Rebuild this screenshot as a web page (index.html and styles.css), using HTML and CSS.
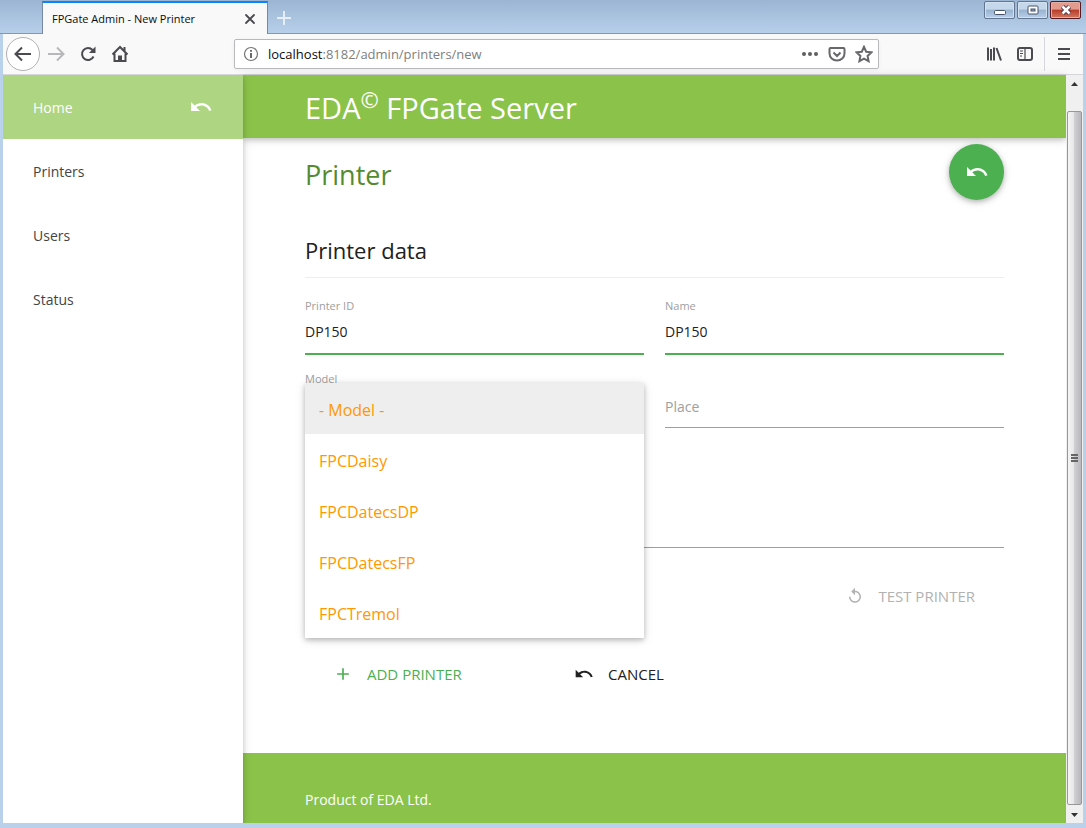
FILE: index.html
```html
<!DOCTYPE html>
<html lang="en">
<head>
<meta charset="utf-8">
<meta name="viewport" content="width=device-width, initial-scale=1">
<title>FPGate Admin - New Printer</title>
<link rel="stylesheet" href="styles.css">
</head>
<body>
<svg width="0" height="0" class="sprite" aria-hidden="true">
  <symbol id="undo" viewBox="0 0 24 24"><path fill="currentColor" d="M12.5 8c-2.65 0-5.05.99-6.9 2.6L2 7v9h9l-3.620-3.620c1.390-1.160 3.160-1.880 5.120-1.880 3.540 0 6.550 2.310 7.600 5.500l2.370-.78C21.080 11.030 17.150 8 12.500 8z"/></symbol>
  <symbol id="replay" viewBox="0 0 24 24"><path fill="currentColor" d="M12 5V1L7 6l5 5V7c3.310 0 6 2.690 6 6s-2.690 6-6 6-6-2.690-6-6H4c0 4.420 3.580 8 8 8s8-3.580 8-8-3.580-8-8-8z"/></symbol>
  <symbol id="plus" viewBox="0 0 24 24"><path fill="currentColor" d="M19 13h-6v6h-2v-6H5v-2h6V5h2v6h6v2z"/></symbol>
</svg>
<div class="window">
  <header class="titlebar">
    <div class="tab"><span>FPGate Admin - New Printer</span>
      <button class="bare" aria-label="Close tab"><svg width="12" height="12" viewBox="0 0 12 12"><path d="M2 2l8 8M10 2l-8 8" stroke="#4a4a4f" stroke-width="1.800" stroke-linecap="round"/></svg></button>
    </div>
    <button class="bare new-tab" aria-label="New tab"><svg width="14" height="14" viewBox="0 0 14 14"><path d="M7 0v14M0 7h14" stroke="#e6eef7" stroke-width="2"/></svg></button>
    <div class="window-buttons">
      <button aria-label="Minimize"><svg width="12" height="10" viewBox="0 0 12 10"><rect x="0.500" y="5.500" width="11" height="4" rx="1" fill="#fff" stroke="#48536b"/></svg></button>
      <button aria-label="Maximize"><svg width="12" height="10" viewBox="0 0 12 10"><rect x="1" y="1" width="10" height="8" rx="1" fill="#fff" stroke="#48536b"/><rect x="4" y="4" width="4" height="2" fill="#8fa8c6" stroke="#48536b"/></svg></button>
      <button class="close" aria-label="Close"><svg width="12" height="10" viewBox="0 0 12 10"><path d="M2.500 1.500l7 7M9.500 1.500l-7 7" stroke="#4b3340" stroke-width="4.500"/><path d="M2.500 1.500l7 7M9.500 1.500l-7 7" stroke="#fff" stroke-width="2.600"/></svg></button>
    </div>
  </header>
  <div class="toolbar">
    <div class="nav-buttons">
      <button class="bare back" aria-label="Back"><svg width="18" height="18" viewBox="0 0 18 18"><path d="M17 9H2M8 2.500L1.500 9 8 15.500" class="line"/></svg></button>
      <button class="bare dim" aria-label="Forward"><svg width="18" height="18" viewBox="0 0 18 18"><path d="M1 9h15M10 2.500L16.500 9 10 15.500" class="line"/></svg></button>
      <button class="bare" aria-label="Reload"><svg width="18" height="18" viewBox="0 0 18 18"><path d="M14.500 11.500A6 6 0 1 1 13.500 5" class="line"/><path d="M16.500 1.500V8H10z" fill="currentColor"/></svg></button>
      <button class="bare" aria-label="Home page"><svg width="18" height="18" viewBox="0 0 18 18"><path d="M1.500 9.500L9 2l7.500 7.500M3.500 8.500V16h11V8.500M13.500 2v4" class="line"/><path d="M7 16v-5.500h4V16z" fill="currentColor"/></svg></button>
    </div>
    <div class="address">
      <svg width="16" height="16" viewBox="0 0 16 16"><circle cx="8" cy="8" r="6.500" fill="none" stroke="#737373" stroke-width="1.200"/><path d="M8 7v5M8 4v1.800" stroke="#5a5a5a" stroke-width="1.800"/></svg>
      <div class="url"><b>localhost</b>:8182/admin/printers/new</div>
      <button class="bare" aria-label="Page actions"><svg width="18" height="18" viewBox="0 0 18 18" fill="#5f5f60"><circle cx="3" cy="9" r="2"/><circle cx="9" cy="9" r="2"/><circle cx="15" cy="9" r="2"/></svg></button>
      <button class="bare" aria-label="Save to Pocket"><svg width="18" height="18" viewBox="0 0 18 18"><path d="M2.500 3h13q1 0 1 1v4.500a7.500 7 0 0 1-15 0V4q0-1 1-1zM5.500 7.500L9 11l3.500-3.500" class="line"/></svg></button>
      <button class="bare" aria-label="Bookmark"><svg width="18" height="18" viewBox="0 0 18 18"><path d="M9 1.800l2.200 4.900 5.300.6-3.900 3.600 1 5.300L9 13.600l-4.600 2.600 1-5.300-3.900-3.600 5.300-.6z" class="line"/></svg></button>
    </div>
    <div class="tools">
      <button class="bare" aria-label="Library"><svg width="16" height="16" viewBox="0 0 16 16"><path d="M2 1.500v13M5 3v11.500M8 1.500v13M10.500 2l4.500 12.500" class="line"/></svg></button>
      <button class="bare" aria-label="Sidebars"><svg width="18" height="16" viewBox="0 0 18 16"><rect x="2" y="2" width="14" height="12" rx="2" class="line"/><path d="M9 2v12M4 5h3M4 7.500h3M4 10h2" stroke="currentColor" stroke-width="1.200"/></svg></button>
      <button class="bare menu" aria-label="Menu"><svg width="14" height="14" viewBox="0 0 14 14"><path d="M1 2h12M1 7h12M1 12h12" class="line"/></svg></button>
    </div>
  </div>
  <div class="viewport">
    <nav class="sidebar">
      <a href="#" class="active">Home <svg width="24" height="24"><use href="#undo"/></svg></a>
      <a href="#">Printers</a>
      <a href="#">Users</a>
      <a href="#">Status</a>
    </nav>
    <div class="page">
      <header class="brand">EDA<sup>©</sup>&nbsp;FPGate Server</header>
      <main>
        <div class="heading"><h1>Printer</h1>
          <button class="fab" aria-label="Go back"><svg width="24" height="24"><use href="#undo"/></svg></button>
        </div>
        <h2>Printer data</h2>
        <form>
          <div class="field valid"><label for="pid">Printer ID</label><input id="pid" value="DP150"></div>
          <div class="field valid"><label for="pname">Name</label><input id="pname" value="DP150"></div>
          <div class="field model"><label for="model">Model</label>
            <select id="model"><option></option></select>
            <ul class="dropdown">
              <li class="selected">- Model -</li><li>FPCDaisy</li><li>FPCDatecsDP</li><li>FPCDatecsFP</li><li>FPCTremol</li>
            </ul>
          </div>
          <div class="field place"><input placeholder="Place" aria-label="Place"></div>
          <textarea aria-label="Description"></textarea>
          <div class="test"><button type="button" class="flat" disabled><svg width="18" height="18"><use href="#replay"/></svg>TEST PRINTER</button></div>
          <div class="actions">
            <button type="button" class="flat add"><svg width="20" height="20"><use href="#plus"/></svg>ADD PRINTER</button>
            <button type="button" class="flat"><svg width="20" height="20"><use href="#undo"/></svg>CANCEL</button>
          </div>
        </form>
      </main>
      <footer>Product of EDA Ltd.</footer>
    </div>
    <div class="scrollbar" aria-hidden="true">
      <svg width="17" height="18" viewBox="0 0 17 18"><path d="M5 10l3.500-4L12 10z" fill="#333"/></svg>
      <div class="thumb"><i></i><i></i><i></i></div>
      <svg width="17" height="18" viewBox="0 0 17 18"><path d="M5 8l3.500 4L12 8z" fill="#333"/></svg>
    </div>
  </div>
</div>
</body>
</html>
```
FILE: styles.css
```css
* { box-sizing: border-box; }
body { margin: 0; font-family: "Open Sans", "Noto Sans", sans-serif; font-size: 14px; color: #212121; }
button, input, select, textarea { font: inherit; color: inherit; }
svg { display: block; flex: none; }
.sprite { position: absolute; }
.line { fill: none; stroke: currentColor; stroke-width: 2; }
.bare { display: grid; place-items: center; padding: 0; border: 0; background: none; color: #4a4a4f; }

.window { display: flex; flex-direction: column; height: 100vh; padding: 0 3px 5px; background: #b9d1ea; }
.titlebar { display: flex; align-items: stretch; height: 34px; flex: none; margin: 0 -3px; padding: 1px 5px 0 42px; background: linear-gradient(#9bb5d3, #b8d0ea); box-shadow: inset 0 -1px #8596b0; }
.tab { display: flex; align-items: center; justify-content: space-between; width: 226px; padding: 0 11px 0 9px; border: solid #7688a3; border-width: 0 1px; border-top: 2px solid #0a84ff; background: #f9f9fa; color: #0c0c0d; white-space: nowrap; }
.tab span { font-size: 11px; }
.new-tab { margin-left: 9px; }
.window-buttons { display: flex; gap: 2px; margin-left: auto; height: 18px; }
.window-buttons button { display: grid; place-items: center; width: 31px; padding: 0; border: 1px solid #63758f; border-radius: 2px; background: linear-gradient(#c4d7eb 45%, #98b2d0 50%, #b8cfe8); box-shadow: inset 0 0 0 1px #d3e2f1; }
.window-buttons .close { border-color: #521b25; background: linear-gradient(#e29b8d 45%, #b83b28 50%, #d27a5f); box-shadow: inset 0 0 0 1px #e9aea2; }

.toolbar { display: flex; align-items: center; height: 41px; flex: none; background: #f9f9fa; border-bottom: 1px solid #d7d7db; }
.nav-buttons { display: flex; align-items: center; gap: 14px; width: 231px; padding-left: 3px; }
.nav-buttons .back { width: 34px; height: 34px; border: 1px solid #b1b1b3; border-radius: 50%; background: #fff; }
.nav-buttons .back + .bare { margin-left: -7px; }
.dim { color: #b8b8ba; }
.address { display: flex; align-items: center; flex: 0 1 645px; height: 30px; padding: 0 5px 0 8px; gap: 9px; border: 1px solid #b9b9bb; border-radius: 2px; background: #fff; box-shadow: 0 1px 4px #0000000d; color: #6f6f72; }
.address .bare { color: #68686b; }
.url { flex: 1; font-size: 13px; color: #808080; }
.url b { font-weight: 400; color: #0c0c0d; }
.tools { display: flex; align-items: center; gap: 14px; margin-left: auto; }
.menu { height: 34px; padding: 0 12px; border-left: 1px solid #d7d7db; margin-left: -4px; }

.viewport { display: flex; flex: 1; min-height: 0; background: #fff; }
.sidebar { width: 240px; flex: none; z-index: 1; background: #fff; box-shadow: 0 2px 5px #00000029, 0 2px 10px #0000001f; clip-path: inset(0 -12px 0 0); }
.sidebar a { display: flex; align-items: center; justify-content: space-between; height: 64px; padding: 0 30px; color: #444; text-decoration: none; }
.sidebar a.active { background: #aed581; color: #fff; }
.page { display: flex; flex-direction: column; flex: 1; min-width: 0; }
.brand { display: flex; align-items: center; height: 63px; flex: none; padding: 2px 62px 0; background: #8bc34a; color: #fff; font-size: 29px; box-shadow: 0 2px 5px #00000029, 0 2px 10px #0000001f; }
.brand sup { align-self: flex-start; font-size: 22px; line-height: 44px; }
main { flex: 1; padding: 6px 62px 0; }
.heading { display: flex; justify-content: space-between; height: 56px; }
h1, h2 { margin: 0; font-weight: 400; }
h1 { font-size: 27px; line-height: 62px; color: #558b2f; }
.fab { display: grid; place-items: center; width: 55px; height: 56px; padding: 0; border: 0; border-radius: 50%; background: #4caf50; color: #fff; box-shadow: 0 2px 5px #00000038, 0 2px 10px #0000001f; }
h2 { margin-top: 24px; height: 54px; border-bottom: 1px solid #eee; font-size: 22px; line-height: 52px; }
form { display: grid; grid-template-columns: 1fr 1fr; column-gap: 21px; }
.field { display: flex; flex-direction: column; min-width: 0; }
.field label { font-size: 11px; line-height: 16px; color: #9e9e9e; }
.field input, textarea { width: 100%; border: 0; border-bottom: 1px solid #9e9e9e; border-radius: 0; background: none; padding: 0; outline: 0; resize: none; }
.field input { height: 42px; }
.valid { height: 77px; padding-top: 20px; }
.valid input { height: 41px; border-bottom: 2px solid #4caf50; padding-bottom: 5px; }
.model { position: relative; height: 73px; padding-top: 16px; }
.model select { height: 42px; border: 0; border-bottom: 1px solid #9e9e9e; background: none; appearance: none; }
.dropdown { position: absolute; z-index: 2; top: 28px; left: 0; width: 100%; margin: 0; padding: 0; list-style: none; background: #fff; box-shadow: 0 2px 5px #00000038, 0 2px 10px #0000001f; }
.dropdown li { height: 51px; padding: 0 14px; font-size: 16px; line-height: 54px; color: #ff9800; }
.dropdown .selected { background: #eee; }
.place { padding-top: 31px; }
.place input::placeholder { color: #9e9e9e; opacity: 1; }
textarea { grid-column: 1 / -1; height: 120px; }
.test { grid-column: 1 / -1; display: flex; justify-content: flex-end; padding: 30px 29px 0 0; }
.flat { display: flex; align-items: center; gap: 14px; height: 36px; padding: 0; border: 0; background: none; font-size: 15px; }
.flat:disabled { color: #b2b2b2; }
.actions { grid-column: 1 / -1; display: grid; grid-template-columns: 241px auto; justify-content: start; margin: 42px 0 60px 28px; }
.add { color: #4caf50; }
footer { height: 70px; flex: none; padding: 0 62px; background: #8bc34a; color: #fff; line-height: 94px; }

.scrollbar { display: flex; flex-direction: column; width: 17px; flex: none; padding-top: 1px; background: #f0f0f0; }
.thumb { display: flex; flex-direction: column; justify-content: center; align-items: center; gap: 1px; flex: 1; margin: 17px 1px 0; border: 1px solid #979797; border-radius: 2px; background: linear-gradient(90deg, #f5f5f5, #e6e6e8 45%, #cfcfd2 50%, #b9b9bd); }
.thumb i { width: 7px; height: 2px; background: #666; }
```
